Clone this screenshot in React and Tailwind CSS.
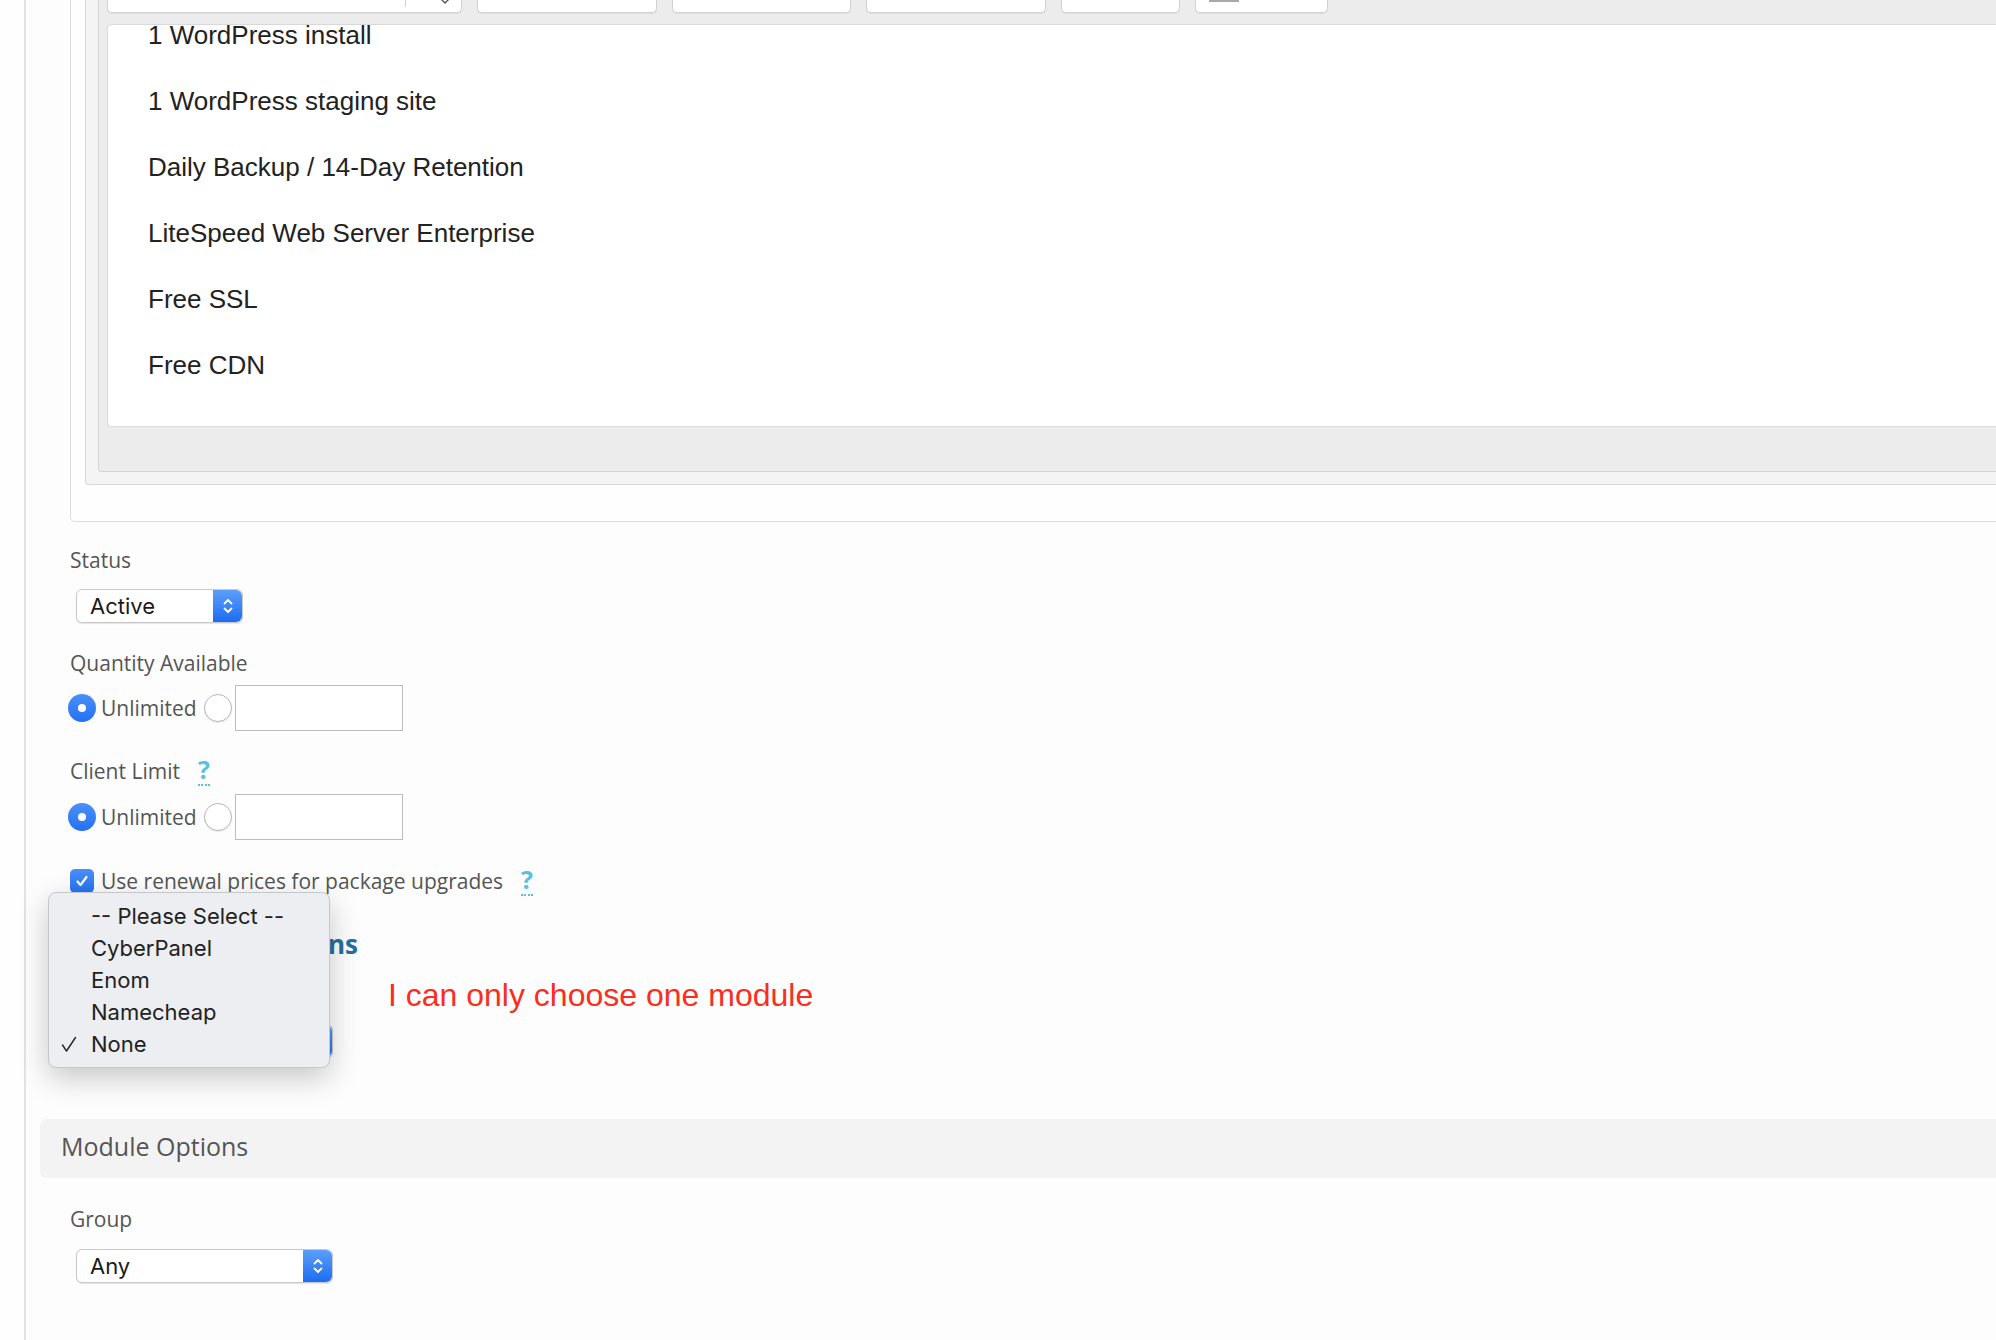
import React from 'react';

const features = [
  '1 WordPress install',
  '1 WordPress staging site',
  'Daily Backup / 14-Day Retention',
  'LiteSpeed Web Server Enterprise',
  'Free SSL',
  'Free CDN',
];

const modules = ['-- Please Select --', 'CyberPanel', 'Enom', 'Namecheap', 'None'];

function Stepper() {
  return (
    <div className="flex w-[29px] shrink-0 items-center justify-center rounded-r-[6px] bg-linear-to-b from-[#5c9ef9] to-[#1a6cf1]">
      <svg width="12" height="20" viewBox="0 0 12 20" fill="none" stroke="white" strokeWidth="1.8" strokeLinecap="round" strokeLinejoin="round">
        <path d="M2.5 7.5 6 4l3.5 3.5" />
        <path d="M2.5 12.5 6 16l3.5-3.5" />
      </svg>
    </div>
  );
}

function MacSelect({ value, className }) {
  return (
    <div className={`ml-[6px] flex h-[34px] rounded-[6px] border border-[#c9c9c9] bg-white shadow-[0_1px_1px_rgba(0,0,0,0.1)] ${className}`}>
      <span className="flex flex-1 items-center pl-[13px] font-['Inter',sans-serif] text-[22px] text-[#1a1a1a]">{value}</span>
      <Stepper />
    </div>
  );
}

function Radio({ checked }) {
  if (checked) {
    return (
      <span className="flex h-[28px] w-[28px] items-center justify-center rounded-full bg-linear-to-b from-[#4b8ff8] to-[#2371f2]">
        <span className="h-[8px] w-[8px] rounded-full bg-white" />
      </span>
    );
  }
  return <span className="block h-[28px] w-[28px] rounded-full border border-[#b8b8b8] bg-white shadow-[0_1px_1px_rgba(0,0,0,0.08)]" />;
}

function LimitRow() {
  return (
    <div className="flex h-[46px] items-center">
      <span className="-ml-[2px]"><Radio checked /></span>
      <span className="ml-[5px] text-[21px] leading-[30px] text-[#555]">Unlimited</span>
      <span className="ml-[7px]"><Radio /></span>
      <span className="ml-[3px] h-[46px] w-[168px] border-[1.5px] border-[#bcbcbc] bg-white" />
    </div>
  );
}

function Help() {
  return (
    <span className="inline-block border-b-2 border-dotted border-[#5bc0de] text-[25px] font-bold leading-[29px] text-[#5bc0de]">?</span>
  );
}

function Label({ children, className = '' }) {
  return <div className={`text-[21px] leading-[30px] text-[#555] ${className}`}>{children}</div>;
}

function ToolButton({ className, children }) {
  return (
    <div className={`relative h-[13px] rounded-b-[5px] border-x border-b border-[#d2d2d2] bg-white shadow-[0_1px_0_rgba(0,0,0,0.06)] ${className}`}>
      {children}
    </div>
  );
}

export default function App() {
  return (
    <div className="relative flex h-[1340px] w-[1996px] overflow-hidden bg-[#fdfdfd] font-['Open_Sans',sans-serif]">
      <div className="w-[24px] shrink-0 bg-[#fefefe]" />
      <div className="w-[2px] shrink-0 bg-[#e2e2e2]" />

      <div className="flex flex-1 flex-col pl-[14px]">
        {/* description editor */}
        <div className="pl-[30px]">
          <div className="rounded-bl-[5px] border-b border-l border-[#dcdcdc] bg-[#fefefe] pb-[36px] pl-[14px]">
            <div className="rounded-bl-[4px] border-b border-l border-[#d8d8d8] bg-[#f4f4f4] pb-[12px] pl-[12px]">
              <div className="rounded-bl-[4px] border-b border-l border-[#d4d4d4] bg-[#ececec] pb-[44px] pl-[8px]">
                <div className="flex items-start">
                  <ToolButton className="w-[355px]">
                    <span className="absolute left-[297px] top-0 h-[7px] w-px bg-[#cfcfcf]" />
                    <svg className="absolute left-[332px] -top-[3px]" width="10" height="8" viewBox="0 0 10 8" fill="none" stroke="#555" strokeWidth="1.4">
                      <path d="M1 2l4 4 4-4" />
                    </svg>
                  </ToolButton>
                  <ToolButton className="ml-[15px] w-[180px]" />
                  <ToolButton className="ml-[15px] w-[179px]" />
                  <ToolButton className="ml-[15px] w-[180px]" />
                  <ToolButton className="ml-[15px] w-[119px]" />
                  <ToolButton className="ml-[15px] w-[133px]">
                    <span className="absolute left-[13px] top-0 h-[2px] w-[30px] bg-[#a9a9a9]" />
                  </ToolButton>
                </div>
                <div className="mt-[11px] h-[403px] overflow-hidden rounded-l-[5px] border-y border-l border-[#d9d9d9] bg-white">
                  <div className="-mt-[23px] pl-[40px] font-['Liberation_Sans',Arial,sans-serif] text-[26px] leading-[66px] text-[#222]">
                    {features.map((f) => (
                      <div key={f}>{f}</div>
                    ))}
                  </div>
                </div>
              </div>
            </div>
          </div>
        </div>

        {/* form fields */}
        <div className="flex flex-col pl-[30px]">
          <Label className="mt-[23px]">Status</Label>
          <MacSelect value="Active" className="mt-[14px] w-[167px]" />

          <Label className="mt-[25px]">Quantity Available</Label>
          <div className="mt-[7px]"><LimitRow /></div>

          <div className="mt-[24px] flex items-baseline">
            <Label>Client Limit</Label>
            <span className="ml-[18px]"><Help /></span>
          </div>
          <div className="mt-[8px]"><LimitRow /></div>

          <div className="mt-[25px] flex items-center">
            <span className="flex h-[24px] w-[24px] items-center justify-center rounded-[5px] bg-linear-to-b from-[#4b8ff8] to-[#2371f2]">
              <svg width="16" height="16" viewBox="0 0 16 16" fill="none" stroke="white" strokeWidth="2.2" strokeLinecap="round" strokeLinejoin="round">
                <path d="M3.5 8.5l3 3.5 6-8" />
              </svg>
            </span>
            <div className="ml-[7px] flex items-baseline">
              <Label>Use renewal prices for package upgrades</Label>
              <span className="ml-[18px]"><Help /></span>
            </div>
          </div>

          <div className="mt-[31px] w-[288px] overflow-hidden whitespace-nowrap text-right text-[26px] font-bold leading-[34px] text-[#23709f]">
            Provisioning Options
          </div>

          <div className="flex items-start">
            <div className="w-[318px] pt-[63px]">
              <MacSelect value="None" className="w-[257px]" />
            </div>
            <div className="mt-[16px] font-['Liberation_Sans',Arial,sans-serif] text-[32px] leading-[36px] text-[#fa2d1f]">
              I can only choose one module
            </div>
          </div>
        </div>

        {/* module options */}
        <div className="mt-[61px] flex h-[59px] items-center rounded-l-[6px] bg-[#f3f3f3] pb-[6px] pl-[21px]">
          <span className="text-[25px] leading-[34px] text-[#555]">Module Options</span>
        </div>

        <div className="flex flex-col pl-[30px]">
          <Label className="mt-[26px]">Group</Label>
          <MacSelect value="Any" className="mt-[15px] w-[257px]" />
        </div>
      </div>

      {/* open select menu */}
      <div className="absolute left-[48px] top-[892px] h-[176px] w-[282px] rounded-[8px] border border-[#c6c7ca] bg-[#eceef1] pt-[7px] font-['Inter',sans-serif] text-[22px] text-[#222] shadow-[0_10px_30px_rgba(0,0,0,0.22)]">
        {modules.map((m) => (
          <div key={m} className="flex h-[32px] items-center">
            <span className="flex w-[42px] justify-start pl-[12px]">
              {m === 'None' && (
                <svg width="16" height="16" viewBox="0 0 16 16" fill="none" stroke="#2a2a2a" strokeWidth="1.5" strokeLinecap="round" strokeLinejoin="round">
                  <path d="M1.5 9 5.5 15 14.5 1.5" />
                </svg>
              )}
            </span>
            <span>{m}</span>
          </div>
        ))}
      </div>
    </div>
  );
}
